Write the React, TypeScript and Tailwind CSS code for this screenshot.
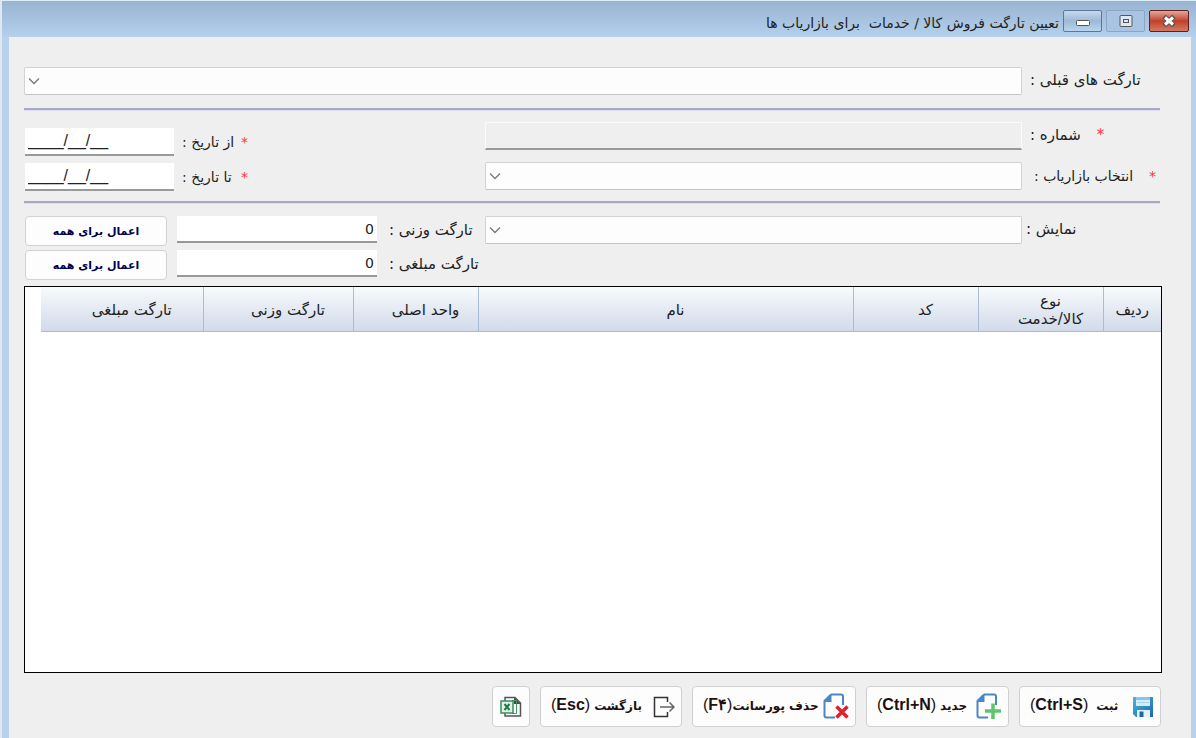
import type { ReactNode } from 'react';

const TEXT = "font-['DejaVu_Sans',sans-serif]";

interface Column {
  title: ReactNode;
  width: string;
  pad: string;
}

const columns: Column[] = [
  { title: 'ردیف', width: 'w-[58px]', pad: '' },
  { title: (<>نوع<br />کالا/خدمت</>), width: 'w-[125px]', pad: 'pl-5' },
  { title: 'کد', width: 'w-[125px]', pad: 'pl-5' },
  { title: 'نام', width: '', pad: 'pl-5' },
  { title: 'واحد اصلی', width: 'w-[125px]', pad: 'pl-5' },
  { title: 'تارگت وزنی', width: 'w-[150px]', pad: 'pl-5' },
  { title: 'تارگت مبلغی', width: 'w-[162px]', pad: 'pl-5' },
];

function Combo({ id }: { id: string }) {
  return (
    <div className="relative min-w-0 flex-1">
      <select
        id={id}
        className="block h-7 w-full appearance-none rounded-xs border border-[#d2d2d2] border-b-[#c4c4c4] bg-[#fdfdfd] px-2"
      />
      <svg
        viewBox="0 0 12 8"
        className="pointer-events-none absolute top-2.5 left-1 h-2 w-3 fill-none stroke-[#777] stroke-[1.3]"
      >
        <path d="M1 1.5 6 6.5 11 1.5" />
      </svg>
    </div>
  );
}

function Rule() {
  return <div className="mr-[31px] ml-[15px] h-[3px] border-t-2 border-b border-t-[#a9a9c4] border-b-[#dcdcf2]" />;
}

function Star() {
  return <span className="text-[#f33]">*</span>;
}

function DateField({ id, label }: { id: string; label: string }) {
  return (
    <div className="flex h-7 items-center">
      <Star />
      <label htmlFor={id} className="w-[67px] pl-2 text-left whitespace-nowrap">
        {label}
      </label>
      <input
        id={id}
        dir="ltr"
        defaultValue="____/__/__"
        className="h-7 w-[149px] border-b-2 border-[#999] bg-white px-[3px] font-['Liberation_Sans',sans-serif] text-base"
      />
    </div>
  );
}

function AmountField({ id, label }: { id: string; label: string }) {
  return (
    <div className="flex h-[30px] items-start">
      <label htmlFor={id} className="w-[102px] pt-0.5 pl-3 text-left text-[15px] leading-6 whitespace-nowrap">
        {label}
      </label>
      <input
        id={id}
        dir="ltr"
        defaultValue="0"
        className="h-[27px] w-[200px] border-b-2 border-[#999] bg-white px-[3px] text-right"
      />
      <button
        type="button"
        className="mr-2.5 h-[30px] w-[142px] rounded-sm border border-[#d2d2d2] bg-[#fdfdfd] pt-0.5 text-[11px] font-bold text-[#000050]"
      >
        اعمال برای همه
      </button>
    </div>
  );
}

function SaveIcon() {
  return (
    <svg viewBox="0 0 22 22" className="size-[22px] shrink-0">
      <defs>
        <linearGradient id="disk" x1="0" y1="0" x2="1" y2="1">
          <stop offset="0" stopColor="#4fb5e2" />
          <stop offset="1" stopColor="#1668ac" />
        </linearGradient>
      </defs>
      <path d="M1 1h20v20H4l-3-3z" fill="url(#disk)" />
      <path d="M4 1.500h14V10H4z" fill="#d5edf9" />
      <path d="M4 3h14" stroke="#3c9fd0" />
      <path d="M5 6.500h12" stroke="#a8d5ec" />
      <path d="M5 14h13v7H5z" fill="#e4f3fb" />
      <path d="M7.500 15.500h4V21h-4z" fill="#1c69a8" />
    </svg>
  );
}

function PageIcon({ children }: { children: ReactNode }) {
  return (
    <svg viewBox="0 0 26 27" className="h-[27px] w-[26px] shrink-0 fill-none">
      <path d="M8 1.500h10a2 2 0 0 1 2 2V12M12 24.500H3.500a2 2 0 0 1-2-2V8L8 1.500" stroke="#4a86c5" strokeWidth="2" />
      <path d="M1.500 9 8.500 1.500V9z" fill="#4a86c5" />
      {children}
    </svg>
  );
}

function ExitIcon() {
  return (
    <svg viewBox="0 0 22 22" className="size-[22px] shrink-0 fill-none stroke-[#333] stroke-[1.5]">
      <path d="M14.500 6V1.500H1.500v19h13V16" />
      <path d="M7 11h13.500M16.500 6.500 21 11l-4.500 4.500" stroke="#666" />
    </svg>
  );
}

function ExcelIcon() {
  return (
    <svg viewBox="0 0 22 22" className="size-[22px] fill-none">
      <path d="M5 5V1.500h10L20.500 7v13H5v-3" stroke="#555" strokeWidth="1.500" />
      <path d="M14 1.500 20.500 8H14z" fill="#444" />
      <path d="M12 4.500h4.500v13H12" stroke="#3f9b68" />
      <path d="M1 5h12v12H1z" fill="#e2f2e9" stroke="#36905d" strokeWidth="1.500" />
      <path d="m4.500 8 5 6m0-6-5 6" stroke="#1f7a48" strokeWidth="2" />
    </svg>
  );
}

interface ActionProps {
  width: string;
  gap?: string;
  icon: ReactNode;
  text: string;
  hotkey: string;
}

function ActionButton({ width, gap = 'gap-1', icon, text, hotkey }: ActionProps) {
  return (
    <button
      type="button"
      className={`${width} flex h-[41px] items-center rounded-sm border border-[#d0d0d0] bg-[#fdfdfd] pr-1.5 pl-2.5 font-bold whitespace-nowrap text-[#201010]`}
    >
      {icon}
      <span className={`${gap} flex flex-1 items-baseline justify-end pb-1`}>
        <span className="text-xs">{text}</span>
        <span dir="ltr" className="font-['Liberation_Sans',sans-serif] text-base">
          <span className="font-normal">(</span>
          {hotkey}
          <span className="font-normal">)</span>
        </span>
      </span>
    </button>
  );
}

export default function App() {
  return (
    <div
      dir="rtl"
      className={`${TEXT} flex min-h-screen flex-col border-t border-l-2 border-t-[#dcecfa] border-l-[#dfe8f2] bg-[#b9d1ea] text-sm text-[#222]`}
    >
      <header className="flex h-9 shrink-0 items-center bg-linear-to-b from-[#99b4d1] to-[#b5d0ec] pt-1 pr-[7px]">
        <div dir="ltr" className="flex gap-1">
          <button type="button" aria-label="کوچک کردن" className="flex h-[22px] w-[39px] items-center justify-center rounded-xs border border-[#5c7896] bg-linear-to-b from-[#c5d9ed] via-[#9db9d8] to-[#b8d4ee] pt-1">
            <svg viewBox="0 0 14 6" className="h-1.5 w-3.5 fill-white stroke-[#555]">
              <rect x=".5" y=".5" width="13" height="5" rx="1" />
            </svg>
          </button>
          <button type="button" aria-label="بزرگ کردن" className="flex h-[22px] w-[39px] items-center justify-center rounded-xs border border-[#8ba6c4] bg-[#a9c4e2]">
            <svg viewBox="0 0 14 12" className="h-3 w-3.5 fill-[#dfe8f2] stroke-[#555]">
              <rect x="1" y=".5" width="12" height="11" rx="1" />
              <rect x="4.500" y="4.500" width="5" height="3" />
            </svg>
          </button>
          <button type="button" aria-label="بستن" className="flex h-[22px] w-10 items-center justify-center rounded-xs border border-[#5c2020] bg-linear-to-b from-[#e8a59a] via-[#c0402a] to-[#d87860]">
            <svg viewBox="0 0 14 12" className="h-3 w-3.5">
              <path d="m2 1.500 10 9m0-9-10 9" stroke="#555" strokeWidth="5" />
              <path d="m3 2.500 8 7m0-7-8 7" stroke="#fff" strokeWidth="3" />
            </svg>
          </button>
        </div>
        <h1 className="mr-1 pt-1 whitespace-pre">تعیین تارگت فروش کالا / خدمات  برای بازاریاب ها</h1>
      </header>

      <main className="mr-[5px] ml-[7px] flex flex-1 flex-col bg-[#efefef] pt-[30px]">
        <div className="mr-[31px] ml-[15px] flex items-center">
          <label htmlFor="previous" className="w-[138px] pl-2 text-left text-[15px] whitespace-nowrap">
            تارگت های قبلی :
          </label>
          <Combo id="previous" />
        </div>

        <div className="mt-[13px]">
          <Rule />
        </div>

        <div className="mr-[31px] ml-[15px] flex pt-[11px] pb-2.5">
          <div className="flex min-w-0 flex-1 flex-col gap-3">
            <div className="flex items-center">
              <label htmlFor="number" className="flex w-[138px] justify-end gap-4 pl-2 text-[15px] whitespace-nowrap">
                <Star />
                شماره :
              </label>
              <input
                id="number"
                readOnly
                className="h-7 min-w-0 flex-1 border border-b-2 border-[#fafafa] border-b-[#999] bg-[#efefef] px-2"
              />
            </div>
            <div className="flex items-center">
              <label htmlFor="marketer" className="flex w-[138px] justify-end gap-4 pl-3 whitespace-nowrap">
                <Star />
                انتخاب بازاریاب :
              </label>
              <Combo id="marketer" />
            </div>
          </div>
          <div className="flex w-[461px] flex-col items-end gap-[7px] pt-1.5 pl-px">
            <DateField id="from" label="از تاریخ :" />
            <DateField id="to" label="تا تاریخ :" />
          </div>
        </div>

        <Rule />

        <div className="mr-[31px] ml-[15px] flex pt-3">
          <div className="flex h-7 min-w-0 flex-1 items-center">
            <label htmlFor="view" className="w-[138px] pl-1 text-left text-[15px] whitespace-nowrap">
              نمایش :
            </label>
            <Combo id="view" />
          </div>
          <div className="flex w-[461px] flex-col items-end gap-1 pl-px">
            <AmountField id="weight" label="تارگت وزنی :" />
            <AmountField id="amount" label="تارگت مبلغی :" />
          </div>
        </div>

        <div className="mt-1.5 mr-[29px] ml-[15px] min-h-[387px] flex-1 border border-black bg-white pl-4">
          <table className="w-full table-fixed border-collapse">
            <thead>
              <tr className="h-11 bg-linear-to-b from-[#f8fbfd] to-[#d2dae9]">
                {columns.map((col, i) => (
                  <th
                    key={i}
                    scope="col"
                    className={`${col.width} ${col.pad} border-b border-l border-[#a8bdd5] p-0 pt-0.5 text-center text-[15px] leading-[18px] font-normal last:border-l-0`}
                  >
                    {col.title}
                  </th>
                ))}
              </tr>
            </thead>
          </table>
        </div>

        <footer className="mt-[13px] mr-[30px] mb-[11px] flex gap-2.5">
          <ActionButton width="w-[142px]" gap="gap-2" icon={<SaveIcon />} text="ثبت" hotkey="Ctrl+S" />
          <ActionButton
            width="w-[143px]"
            icon={<PageIcon><path d="M9 18h16M17 10.500V26" stroke="#5fc46a" strokeWidth="3.500" /></PageIcon>}
            text="جدید"
            hotkey="Ctrl+N"
          />
          <ActionButton
            width="w-[164px]"
            gap="gap-0"
            icon={<PageIcon><path d="m13.500 13.500 11 11m0-11-11 11" stroke="#e0202c" strokeWidth="3.500" /></PageIcon>}
            text="حذف پورسانت"
            hotkey="F۴"
          />
          <ActionButton width="w-[142px]" icon={<ExitIcon />} text="بازگشت" hotkey="Esc" />
          <button
            type="button"
            aria-label="خروجی اکسل"
            className="flex h-[41px] w-[38px] items-center justify-center rounded-sm border border-[#d0d0d0] bg-[#fdfdfd]"
          >
            <ExcelIcon />
          </button>
        </footer>
      </main>
    </div>
  );
}
